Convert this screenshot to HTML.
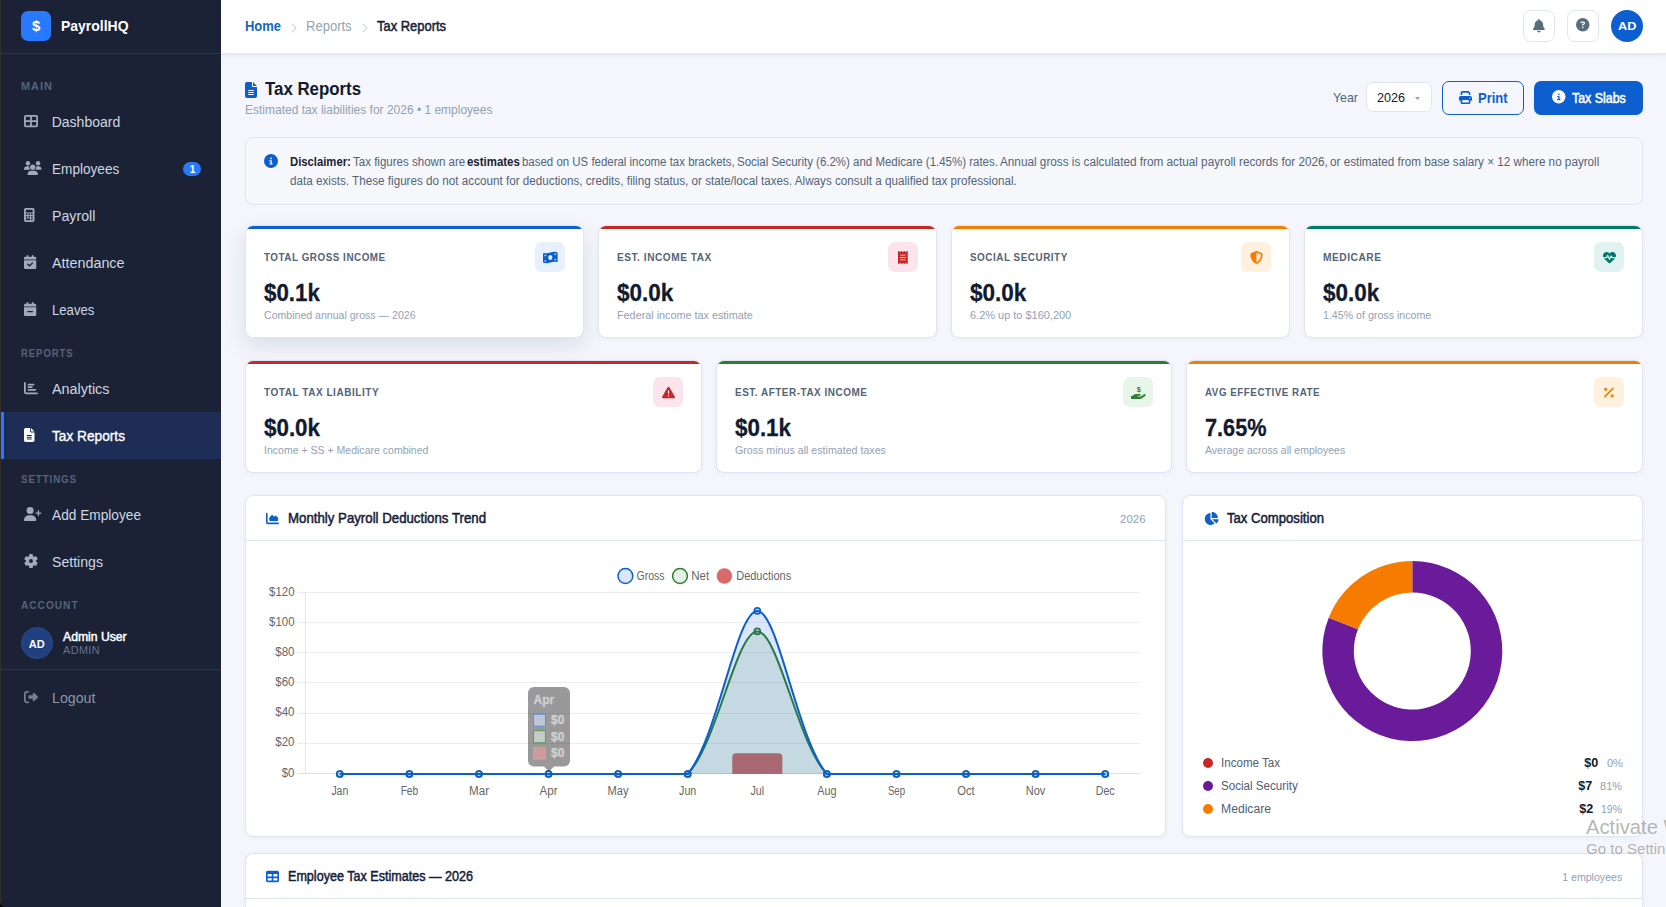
<!DOCTYPE html>
<html lang="en">
<head>
<meta charset="utf-8">
<title>Tax Reports - PayrollHQ</title>
<style>
*{box-sizing:border-box;margin:0;padding:0}
html,body{width:1666px;height:907px;overflow:hidden}
body{position:relative;background:#f4f6fb;font-family:"Liberation Sans",sans-serif;color:#1a2236;font-size:14px}
.a{position:absolute;white-space:nowrap;line-height:1}
.t{position:absolute;white-space:nowrap;line-height:20px;height:20px;margin-top:-10px;margin-left:-.3px;transform-origin:0 50%}
.r{transform-origin:100% 50%}
.b{font-weight:700}
svg{position:absolute;display:block;overflow:visible}
/* sidebar */
#sb{left:0;top:0;width:221px;height:907px;background:#1b2236;border-left:1px solid #32302d;border-bottom-left-radius:5px}
#logo{left:21px;top:11px;width:30px;height:30px;border-radius:7px;background:#2979ff}
.sbl{font-size:10.5px;font-weight:700;letter-spacing:1px;color:#56637d}
.nv{font-size:14px;color:#cdd6e2;left:52px}
.ni{fill:#a0aaba}
#act{left:1px;top:412px;width:220px;height:47px;background:#1d2d55;border-left:3px solid #2979ff}
/* topbar */
#tb{left:221px;top:0;width:1445px;height:54px;background:#fff;border-bottom:1px solid #e4e9f3;box-shadow:0 1px 4px rgba(30,50,100,.10)}
.ib{width:32px;height:32px;top:10px;border:1px solid #e0e6f1;border-radius:8px;background:#fff}
/* cards */
.card{background:#fff;border:1px solid #e0e4f0;border-radius:8px;box-shadow:0 1px 4px rgba(30,50,100,.05)}
.sc{height:113px;overflow:hidden}
.sc i{position:absolute;left:0;top:0;width:100%;height:3px}
.sl{font-size:10.5px;font-weight:700;letter-spacing:.55px;color:#546478}
.sv{font-size:24px;font-weight:700;color:#111a2e;line-height:30px;height:30px;margin-top:-14.400px;-webkit-text-stroke:.3px #111a2e}
.ss{font-size:11px;color:#93a1b3}
.ic{width:30px;height:30px;border-radius:7px}
.ch{font-size:14px;color:#16203a;-webkit-text-stroke:.5px #16203a}
.ax{font-size:12px;color:#666}
.lg{font-size:12px;color:#4f6072}
.lv{font-size:12px;font-weight:700;color:#111a2e}
.lp{font-size:11px;color:#93a1b3}
/*FIT*/
#t_brand{transform:scaleX(0.9970)}
#t_main{transform:scaleX(1.0375)}
#t_dash{transform:scaleX(1.0000)}
#t_emp{transform:scaleX(0.9716)}
#t_pay{transform:scaleX(1.0141)}
#t_att{transform:scaleX(1.0234)}
#t_leav{transform:scaleX(0.9390)}
#t_reports{transform:scaleX(0.9106)}
#t_ana{transform:scaleX(1.0262)}
#t_taxr{transform:scaleX(0.9772)}
#t_settingsl{transform:scaleX(0.9254)}
#t_addemp{transform:scaleX(0.9774)}
#t_set{transform:scaleX(1.0080)}
#t_account{transform:scaleX(0.9681)}
#t_admin{transform:scaleX(0.9378)}
#t_adminr{transform:scaleX(1.0323)}
#t_logout{transform:scaleX(1.0134)}
#t_home{transform:scaleX(0.9253)}
#t_reps{transform:scaleX(0.9300)}
#t_taxr2{transform:scaleX(0.9237)}
#t_ad2{transform:scaleX(1.1516)}
#t_title{transform:scaleX(0.9347)}
#t_sub{transform:scaleX(0.9989)}
#t_year{transform:scaleX(0.9512)}
#t_2026{transform:scaleX(0.9681)}
#t_print{transform:scaleX(0.9282)}
#t_slabs{transform:scaleX(0.8863)}
#t_disc2{transform:scaleX(0.9731)}
#s0l{transform:scaleX(0.9398)}
#s0v{transform:scaleX(0.9290)}
#s0s{transform:scaleX(0.9603)}
#s1l{transform:scaleX(0.9626)}
#s1v{transform:scaleX(0.9374)}
#s1s{transform:scaleX(0.9828)}
#s2l{transform:scaleX(0.9428)}
#s2v{transform:scaleX(0.9374)}
#s2s{transform:scaleX(0.9967)}
#s3l{transform:scaleX(0.9684)}
#s3v{transform:scaleX(0.9374)}
#s3s{transform:scaleX(0.9670)}
#s4l{transform:scaleX(0.9552)}
#s4v{transform:scaleX(0.9324)}
#s4s{transform:scaleX(0.9569)}
#s5l{transform:scaleX(0.9465)}
#s5v{transform:scaleX(0.9324)}
#s5s{transform:scaleX(0.9680)}
#s6l{transform:scaleX(0.9336)}
#s6v{transform:scaleX(0.9036)}
#s6s{transform:scaleX(0.9567)}
#c_title{transform:scaleX(0.9459)}
#c_year{transform:scaleX(0.9963)}
#p_title{transform:scaleX(0.9372)}
#p0l{transform:scaleX(0.9647)}
#p0v{transform:scaleX(1.0480)}
#p0p{transform:scaleX(1.0059)}
#p1l{transform:scaleX(0.9676)}
#p1v{transform:scaleX(1.0480)}
#p1p{transform:scaleX(0.9986)}
#p2l{transform:scaleX(1.0130)}
#p2v{transform:scaleX(1.0480)}
#p2p{transform:scaleX(0.9532)}
#e_title{transform:scaleX(0.8983)}
#e_cnt{transform:scaleX(0.9200)}
#w1{transform:scaleX(1.0118)}
#w2{transform:scaleX(1.0751)}
#d1a{transform:scaleX(0.9397)}
#d1b{transform:scaleX(0.9612)}
#d1c{transform:scaleX(0.9535)}
#d1d{transform:scaleX(0.9542)}
#d1e{transform:scaleX(0.9564)}
#d1f{transform:scaleX(0.9790)}
#d1g{transform:scaleX(0.9741)}
/*ENDFIT*/
</style>
</head>
<body>
<!-- SIDEBAR -->
<div class="a" style="left:0;top:899px;width:8px;height:8px;background:#000"></div>
<div id="sb" class="a"></div>
<div id="logo" class="a"></div>
<div class="t b" id="t_dollar" style="left:32.3px;top:26px;font-size:15px;color:#fff">$</div>
<div class="t b" id="t_brand" style="left:61px;top:26px;font-size:14px;color:#fff">PayrollHQ</div>
<div class="a" style="left:1px;top:53px;width:220px;height:1px;background:#2b344b"></div>
<div class="t sbl" id="t_main" style="left:21px;top:86.300px">MAIN</div>
<div class="t nv" id="t_dash" style="top:122px">Dashboard</div>
<div class="t nv" id="t_emp" style="top:169px">Employees</div>
<div class="a" style="left:183px;top:162px;width:18px;height:14px;border-radius:7px;background:#2979ff"></div>
<div class="t b" id="t_badge" style="left:190px;top:170.200px;font-size:10px;color:#fff">1</div>
<div class="t nv" id="t_pay" style="top:216px">Payroll</div>
<div class="t nv" id="t_att" style="top:263px">Attendance</div>
<div class="t nv" id="t_leav" style="top:310px">Leaves</div>
<div class="t sbl" id="t_reports" style="left:21px;top:353.300px">REPORTS</div>
<div class="t nv" id="t_ana" style="top:389px">Analytics</div>
<div id="act" class="a"></div>
<div class="t nv" id="t_taxr" style="top:436px;color:#fff;-webkit-text-stroke:.35px #fff">Tax Reports</div>
<div class="t sbl" id="t_settingsl" style="left:21px;top:479.300px">SETTINGS</div>
<div class="t nv" id="t_addemp" style="top:515px">Add Employee</div>
<div class="t nv" id="t_set" style="top:562px">Settings</div>
<div class="t sbl" id="t_account" style="left:21px;top:605.300px">ACCOUNT</div>
<div class="a" style="left:21px;top:627px;width:32px;height:32px;border-radius:16px;background:#20407f;border:1px solid #2c4a8a"></div>
<div class="t b" id="t_ad1" style="left:29px;top:644px;font-size:11px;color:#fff">AD</div>
<div class="t" id="t_admin" style="left:63px;top:637px;font-size:13px;color:#fff;-webkit-text-stroke:.5px #fff">Admin User</div>
<div class="t" id="t_adminr" style="left:63px;top:650.200px;font-size:10.5px;letter-spacing:.4px;color:#65748e">ADMIN</div>
<div class="a" style="left:1px;top:669px;width:220px;height:1px;background:#2b344b"></div>
<div class="t nv" id="t_logout" style="top:698px;color:#8a96aa">Logout</div>
<!-- SIDEBAR ICONS -->
<svg class="ni" style="left:24px;top:114px" width="14.00" height="14" viewBox="0 0 512 512"><path fill-rule="evenodd" d="M64 32h384a64 64 0 0 1 64 64v320a64 64 0 0 1-64 64H64a64 64 0 0 1-64-64V96a64 64 0 0 1 64-64zM64 96v128h160V96zM288 96v128h160V96zM64 288v128h160V288zM288 288v128h160V288z"/></svg>
<svg class="ni" style="left:24px;top:161px" width="17.50" height="14" viewBox="0 0 640 512"><circle cx="144" cy="80" r="80"/><circle cx="512" cy="80" r="80"/><circle cx="320" cy="224" r="96"/><path d="M0 298.7C0 239.8 47.8 192 106.7 192h42.700c15.900 0 31 3.500 44.600 9.700-1.300 7.200-1.900 14.700-1.900 22.300 0 38.200 16.800 72.500 43.300 96H21.300C9.600 320 0 310.400 0 298.700zM640 298.700C640 239.800 592.200 192 533.300 192h-42.700c-15.900 0-31 3.500-44.600 9.700 1.300 7.200 1.900 14.700 1.900 22.300 0 38.200-16.800 72.500-43.300 96h214.100c11.700 0 21.300-9.600 21.300-21.300zM128 485.300C128 411.700 187.700 352 261.300 352h117.400C452.300 352 512 411.700 512 485.300c0 14.700-11.900 26.700-26.700 26.700H154.700c-14.700 0-26.700-11.900-26.700-26.700z"/></svg>
<svg class="ni" style="left:24px;top:208px" width="10.50" height="14" viewBox="0 0 384 512"><path fill-rule="evenodd" d="M64 0h256a64 64 0 0 1 64 64v384a64 64 0 0 1-64 64H64a64 64 0 0 1-64-64V64A64 64 0 0 1 64 0zM96 64a32 32 0 0 0-32 32v32a32 32 0 0 0 32 32h192a32 32 0 0 0 32-32V96a32 32 0 0 0-32-32zM96 192a32 32 0 1 0 0 64 32 32 0 1 0 0-64zM192 192a32 32 0 1 0 0 64 32 32 0 1 0 0-64zM288 192a32 32 0 1 0 0 64 32 32 0 1 0 0-64zM96 288a32 32 0 1 0 0 64 32 32 0 1 0 0-64zM192 288a32 32 0 1 0 0 64 32 32 0 1 0 0-64zM288 288a32 32 0 1 0 0 64 32 32 0 1 0 0-64zM288 384a32 32 0 1 0 0 64 32 32 0 1 0 0-64zM96 384a32 32 0 1 0 0 64h96a32 32 0 1 0 0-64z"/></svg>
<svg class="ni" style="left:24px;top:255px" width="12.25" height="14" viewBox="0 0 448 512"><path fill-rule="evenodd" d="M128 0c17.700 0 32 14.300 32 32V64H288V32c0-17.700 14.300-32 32-32s32 14.300 32 32V64h48c26.500 0 48 21.500 48 48v48H0V112C0 85.500 21.500 64 48 64H96V32c0-17.700 14.300-32 32-32zM0 192H448V464c0 26.500-21.500 48-48 48H48c-26.500 0-48-21.500-48-48V192zM329 305c9.400-9.400 9.400-24.600 0-33.900s-24.600-9.400-33.900 0l-95 95-47-47c-9.400-9.400-24.600-9.400-33.900 0s-9.400 24.600 0 33.900l64 64c9.400 9.400 24.600 9.400 33.900 0L329 305z"/></svg>
<svg class="ni" style="left:24px;top:302px" width="12.25" height="14" viewBox="0 0 448 512"><path fill-rule="evenodd" d="M128 0c17.700 0 32 14.300 32 32V64H288V32c0-17.700 14.300-32 32-32s32 14.300 32 32V64h48c26.500 0 48 21.500 48 48v48H0V112C0 85.500 21.500 64 48 64H96V32c0-17.700 14.300-32 32-32zM0 192H448V464c0 26.500-21.500 48-48 48H48c-26.500 0-48-21.500-48-48V192zM312 376c13.300 0 24-10.700 24-24s-10.700-24-24-24H136c-13.300 0-24 10.700-24 24s10.700 24 24 24H312z"/></svg>
<svg class="ni" style="left:24px;top:381px" width="14.00" height="14" viewBox="0 0 512 512"><path d="M32 32c17.700 0 32 14.300 32 32V400c0 8.800 7.200 16 16 16H480c17.700 0 32 14.300 32 32s-14.300 32-32 32H80c-44.200 0-80-35.800-80-80V64C0 46.300 14.300 32 32 32zm96 96c0-17.700 14.300-32 32-32h192c17.700 0 32 14.300 32 32s-14.300 32-32 32H160c-17.700 0-32-14.300-32-32zm32 64H288c17.700 0 32 14.300 32 32s-14.300 32-32 32H160c-17.700 0-32-14.300-32-32s14.300-32 32-32zm0 96H416c17.700 0 32 14.300 32 32s-14.300 32-32 32H160c-17.700 0-32-14.300-32-32s14.300-32 32-32z"/></svg>
<svg class="" style="left:24px;top:428px" width="10.50" height="14" viewBox="0 0 384 512" fill="#fff"><path fill-rule="evenodd" d="M64 0C28.700 0 0 28.700 0 64V448c0 35.300 28.700 64 64 64H320c35.300 0 64-28.700 64-64V160H256c-17.700 0-32-14.300-32-32V0H64zM256 0V128H384L256 0zM112 256H272c8.800 0 16 7.200 16 16s-7.200 16-16 16H112c-8.800 0-16-7.200-16-16s7.200-16 16-16zm0 64H272c8.800 0 16 7.200 16 16s-7.200 16-16 16H112c-8.800 0-16-7.200-16-16s7.200-16 16-16zm0 64H272c8.800 0 16 7.200 16 16s-7.200 16-16 16H112c-8.800 0-16-7.200-16-16s7.200-16 16-16z"/></svg>
<svg class="ni" style="left:24px;top:507px" width="17.50" height="14" viewBox="0 0 640 512"><path d="M96 128a128 128 0 1 1 256 0A128 128 0 1 1 96 128zM0 482.300C0 383.800 79.800 304 178.300 304h91.400C368.200 304 448 383.800 448 482.300c0 16.400-13.300 29.700-29.700 29.700H29.700C13.300 512 0 498.700 0 482.300zM504 312V248H440c-13.300 0-24-10.700-24-24s10.700-24 24-24h64V136c0-13.300 10.700-24 24-24s24 10.700 24 24v64h64c13.300 0 24 10.700 24 24s-10.700 24-24 24H552v64c0 13.300-10.700 24-24 24s-24-10.700-24-24z"/></svg>
<svg class="ni" style="left:24px;top:554px" width="14.00" height="14" viewBox="0 0 512 512"><path fill-rule="evenodd" d="M256 66a190 190 0 1 0 0 380 190 190 0 1 0 0-380zM256 186a70 70 0 1 1 0 140 70 70 0 1 1 0-140z"/><rect x="186" y="4" width="140" height="150" rx="34" transform="rotate(0 256 256)"/><rect x="186" y="4" width="140" height="150" rx="34" transform="rotate(60 256 256)"/><rect x="186" y="4" width="140" height="150" rx="34" transform="rotate(120 256 256)"/><rect x="186" y="4" width="140" height="150" rx="34" transform="rotate(180 256 256)"/><rect x="186" y="4" width="140" height="150" rx="34" transform="rotate(240 256 256)"/><rect x="186" y="4" width="140" height="150" rx="34" transform="rotate(300 256 256)"/></svg>
<svg class="" style="left:24px;top:690px" width="14.00" height="14" viewBox="0 0 512 512" fill="#727e94"><path d="M377.900 105.900L500.700 228.700c7.200 7.200 11.300 17.100 11.300 27.300s-4.100 20.100-11.300 27.300L377.900 406.100c-6.400 6.400-15 9.900-24 9.900-18.700 0-33.900-15.200-33.900-33.900V320H192c-17.700 0-32-14.300-32-32V224c0-17.700 14.300-32 32-32H320V129.900c0-18.700 15.200-33.900 33.900-33.900 9 0 17.600 3.600 24 9.900zM160 96H96c-17.700 0-32 14.300-32 32V384c0 17.700 14.300 32 32 32h64c17.700 0 32 14.300 32 32s-14.300 32-32 32H96c-53 0-96-43-96-96V128C0 75 43 32 96 32h64c17.700 0 32 14.300 32 32s-14.300 32-32 32z"/></svg>

<!-- TOPBAR -->
<div id="tb" class="a"></div>
<div class="t b" id="t_home" style="left:245px;top:26px;font-size:14px;color:#1565c0">Home</div>
<div class="t" id="t_reps" style="left:306px;top:26px;font-size:14px;color:#93a4b3">Reports</div>
<div class="t" id="t_taxr2" style="left:377px;top:26px;font-size:14px;color:#1a2236;-webkit-text-stroke:.5px #1a2236">Tax Reports</div>
<div class="a ib" style="left:1523px"></div>
<div class="a ib" style="left:1567px"></div>
<div class="a" style="left:1611px;top:10px;width:32px;height:32px;border-radius:16px;background:#0d5fd0"></div>
<div class="t b" id="t_ad2" style="left:1618px;top:25.700px;font-size:11px;color:#fff">AD</div>
<svg style="left:1533px;top:18.5px" width="11.81" height="13.5" viewBox="0 0 448 512" fill="#546e7a"><path d="M224 0c-17.700 0-32 14.300-32 32V51.200C119 66 64 130.600 64 208v18.800c0 47-17.300 92.400-48.500 127.600l-7.400 8.300c-8.400 9.400-10.400 22.900-5.300 34.400S19.400 416 32 416H416c12.600 0 24-7.400 29.200-18.900s3.100-25-5.300-34.400l-7.400-8.300C401.300 319.200 384 273.900 384 226.800V208c0-77.400-55-142-128-156.800V32c0-17.700-14.300-32-32-32zm45.300 493.300c12-12 18.700-28.300 18.700-45.300H160c0 17 6.700 33.300 18.700 45.300s28.300 18.700 45.300 18.700 33.300-6.700 45.300-18.700z"/></svg>
<svg style="left:1576.2px;top:18.3px" width="13.50" height="13.5" viewBox="0 0 512 512" fill="#546e7a"><path fill-rule="evenodd" d="M256 512A256 256 0 1 0 256 0a256 256 0 1 0 0 512zM169.800 165.300c7.900-22.300 29.100-37.300 52.800-37.300h58.300c34.900 0 63.100 28.300 63.100 63.100 0 22.600-12.100 43.500-31.700 54.800L280 264.400c-.2 13-10.900 23.600-24 23.600-13.300 0-24-10.700-24-24V250.500c0-8.600 4.600-16.500 12.100-20.800l44.300-25.400c4.700-2.700 7.600-7.700 7.600-13.100 0-8.400-6.800-15.100-15.100-15.100H222.600c-3.400 0-6.400 2.100-7.500 5.300l-.4 1.200c-4.400 12.500-18.200 19-30.600 14.600s-19-18.200-14.600-30.600l.4-1.200zM224 352a32 32 0 1 1 64 0 32 32 0 1 1-64 0z"/></svg>
<svg style="left:288.500px;top:22.500px" width="10" height="10" viewBox="0 0 10 10"><path d="M3 1l4 4-4 4" fill="none" stroke="#d3dae2" stroke-width="1.1" stroke-linecap="round" stroke-linejoin="round"/></svg>
<svg style="left:359.500px;top:22.500px" width="10" height="10" viewBox="0 0 10 10"><path d="M3 1l4 4-4 4" fill="none" stroke="#d3dae2" stroke-width="1.1" stroke-linecap="round" stroke-linejoin="round"/></svg>

<!-- PAGE HEADER -->
<div class="t b" id="t_title" style="left:265px;top:89px;font-size:18px;color:#111a2e;line-height:24px;height:24px;margin-top:-12px">Tax Reports</div>
<div class="t" id="t_sub" style="left:245px;top:109.700px;font-size:12px;color:#93a1b3">Estimated tax liabilities for 2026 • 1 employees</div>
<div class="t" id="t_year" style="left:1333px;top:98px;font-size:13px;color:#546478">Year</div>
<div class="a" style="left:1366px;top:82px;width:66px;height:30px;border:1px solid #e0e6f1;border-radius:7px;background:#fff"></div>
<div class="t" id="t_2026" style="left:1377px;top:98px;font-size:13px;color:#111a2e">2026</div>
<div class="a" style="left:1442px;top:81px;width:82px;height:34px;border:1.5px solid #0d5fd0;border-radius:7px;background:#f4f6fb"></div>
<div class="t b" id="t_print" style="left:1478px;top:98px;font-size:14px;color:#0d5fd0">Print</div>
<div class="a" style="left:1534px;top:81px;width:109px;height:34px;border-radius:7px;background:#0d5fd0"></div>
<div class="t" id="t_slabs" style="left:1572px;top:98px;font-size:14px;color:#fff;-webkit-text-stroke:.5px #fff">Tax Slabs</div>
<svg style="left:245px;top:82px" width="12.00" height="16" viewBox="0 0 384 512" fill="#0d5fd0"><path fill-rule="evenodd" d="M64 0C28.700 0 0 28.700 0 64V448c0 35.300 28.700 64 64 64H320c35.300 0 64-28.700 64-64V160H256c-17.700 0-32-14.300-32-32V0H64zM256 0V128H384L256 0zM112 256H272c8.800 0 16 7.200 16 16s-7.200 16-16 16H112c-8.800 0-16-7.200-16-16s7.200-16 16-16zm0 64H272c8.800 0 16 7.200 16 16s-7.200 16-16 16H112c-8.800 0-16-7.200-16-16s7.200-16 16-16zm0 64H272c8.800 0 16 7.200 16 16s-7.200 16-16 16H112c-8.800 0-16-7.200-16-16s7.200-16 16-16z"/></svg>
<svg style="left:1459px;top:90.7px" width="13.00" height="13" viewBox="0 0 512 512" fill="#0d5fd0"><path fill-rule="evenodd" d="M128 0C92.700 0 64 28.700 64 64v96h64V64H354.700L384 93.300V160h64V93.300c0-17-6.700-33.300-18.700-45.300L400 18.700C388 6.700 371.700 0 354.700 0H128zM384 352v96H128V352H384zm64 32h32c17.700 0 32-14.300 32-32V256c0-35.300-28.700-64-64-64H64c-35.300 0-64 28.700-64 64v96c0 17.700 14.300 32 32 32H64v64c0 35.300 28.700 64 64 64H384c35.300 0 64-28.700 64-64V384zM432 248a24 24 0 1 1 0 48 24 24 0 1 1 0-48z"/></svg>
<svg style="left:1551.8px;top:89.800px" width="13.50" height="13.5" viewBox="0 0 512 512" fill="#fff"><path fill-rule="evenodd" d="M256 512A256 256 0 1 0 256 0a256 256 0 1 0 0 512zM216 336h24V272H216c-13.300 0-24-10.700-24-24s10.700-24 24-24h48c13.300 0 24 10.700 24 24v88h8c13.300 0 24 10.700 24 24s-10.700 24-24 24H216c-13.300 0-24-10.700-24-24s10.700-24 24-24zm40-208a32 32 0 1 1 0 64 32 32 0 1 1 0-64z"/></svg>
<svg style="left:1414.500px;top:96.500px" width="5" height="3" viewBox="0 0 5 3"><path d="M0 0h5L2.500 3z" fill="#97a3b0"/></svg>

<!-- DISCLAIMER -->
<div class="a" style="left:245px;top:137px;width:1398px;height:68px;border:1px solid #dfe4ef;border-radius:8px;background:#f5f7fb"></div>
<div class="t b" id="d1a" style="left:290.5px;top:162px;font-size:12px;color:#1a2236">Disclaimer:</div>
<div class="t" id="d1b" style="left:353.5px;top:162px;font-size:12px;color:#546478">Tax figures shown are</div>
<div class="t b" id="d1c" style="left:467.4px;top:162px;font-size:12px;color:#1a2236">estimates</div>
<div class="t" id="d1d" style="left:522.4px;top:162px;font-size:12px;color:#546478">based on US federal income tax brackets,</div>
<div class="t" id="d1e" style="left:737.1px;top:162px;font-size:12px;color:#546478">Social Security (6.2%) and Medicare (1.45%) rates.</div>
<div class="t" id="d1f" style="left:1000.2px;top:162px;font-size:12px;color:#546478">Annual gross is calculated from actual payroll records for 2026,</div>
<div class="t" id="d1g" style="left:1330.2px;top:162px;font-size:12px;color:#546478">or estimated from base salary × 12 where no payroll</div>
<div class="t" id="t_disc2" style="left:290px;top:181px;font-size:12px;color:#546478">data exists. These figures do not account for deductions, credits, filing status, or state/local taxes. Always consult a qualified tax professional.</div>
<svg style="left:264px;top:154px" width="14.00" height="14" viewBox="0 0 512 512" fill="#0d5fd0"><path fill-rule="evenodd" d="M256 512A256 256 0 1 0 256 0a256 256 0 1 0 0 512zM216 336h24V272H216c-13.300 0-24-10.700-24-24s10.700-24 24-24h48c13.300 0 24 10.700 24 24v88h8c13.300 0 24 10.700 24 24s-10.700 24-24 24H216c-13.300 0-24-10.700-24-24s10.700-24 24-24zm40-208a32 32 0 1 1 0 64 32 32 0 1 1 0-64z"/></svg>

<!--STATS-START-->
<div class="a card sc" style="left:245px;top:225px;width:339px;box-shadow:0 8px 22px rgba(30,50,100,.12)"><i style="background:#0d5fd0"></i></div>
<div class="t sl" id="s0l" style="left:264px;top:257px">TOTAL GROSS INCOME</div>
<div class="t sv" id="s0v" style="left:264px;top:292px">$0.1k</div>
<div class="t ss" id="s0s" style="left:264px;top:315px">Combined annual gross — 2026</div>
<div class="a ic" style="left:535px;top:242px;background:#e7f0fd"></div>
<svg style="left:542.69px;top:250.50px" width="14.62" height="13" viewBox="0 0 576 512" fill="#0d5fd0"><path fill-rule="evenodd" d="M0 112.500V422.300c0 18 10.100 35 27 41.300 87 32.500 174 10.300 261-11.900 79.800-20.300 159.600-40.700 239.300-18.900 23 6.300 48.700-9.500 48.700-33.400V89.700c0-18-10.100-35-27-41.300C462 15.900 375 38.100 288 60.300 208.200 80.600 128.400 100.900 48.700 79.100 25.600 72.800 0 88.600 0 112.500zM288 352c-44.200 0-80-43-80-96s35.800-96 80-96 80 43 80 96-35.800 96-80 96zM64 352c35.300 0 64 28.700 64 64H64V352zm64-208c0 35.300-28.700 64-64 64V144h64zM512 304v64H448c0-35.300 28.700-64 64-64zM448 96h64v64c-35.300 0-64-28.700-64-64z"/></svg>
<div class="a card sc" style="left:598px;top:225px;width:339px"><i style="background:#c62828"></i></div>
<div class="t sl" id="s1l" style="left:617px;top:257px">EST. INCOME TAX</div>
<div class="t sv" id="s1v" style="left:617px;top:292px">$0.0k</div>
<div class="t ss" id="s1s" style="left:617px;top:315px">Federal income tax estimate</div>
<div class="a ic" style="left:888px;top:242px;background:#fce4ec"></div>
<svg style="left:898.12px;top:250.50px" width="9.75" height="13" viewBox="0 0 384 512" fill="#c62828"><path fill-rule="evenodd" d="M14 2.200C22.500-1.700 32.500-.3 39.600 5.800L80 40.400 120.400 5.800c9-7.700 22.300-7.700 31.200 0L192 40.400 232.400 5.800c9-7.700 22.200-7.700 31.200 0L304 40.400 344.400 5.800c7.100-6.100 17.100-7.500 25.600-3.600s14 12.400 14 21.800V488c0 9.400-5.500 17.900-14 21.800s-18.500 2.500-25.600-3.600L304 471.600l-40.400 34.600c-9 7.700-22.200 7.700-31.200 0L192 471.600l-40.400 34.600c-9 7.700-22.300 7.700-31.200 0L80 471.600 39.600 506.200c-7.100 6.100-17.100 7.500-25.600 3.600S0 497.400 0 488V24C0 14.600 5.500 6.100 14 2.200zM96 144c-8.800 0-16 7.200-16 16s7.200 16 16 16H288c8.800 0 16-7.200 16-16s-7.200-16-16-16H96zM80 352c0 8.800 7.200 16 16 16H288c8.800 0 16-7.200 16-16s-7.200-16-16-16H96c-8.800 0-16 7.200-16 16zM96 240c-8.800 0-16 7.200-16 16s7.200 16 16 16H288c8.800 0 16-7.200 16-16s-7.200-16-16-16H96z"/></svg>
<div class="a card sc" style="left:951px;top:225px;width:339px"><i style="background:#f57c00"></i></div>
<div class="t sl" id="s2l" style="left:970px;top:257px">SOCIAL SECURITY</div>
<div class="t sv" id="s2v" style="left:970px;top:292px">$0.0k</div>
<div class="t ss" id="s2s" style="left:970px;top:315px">6.2% up to $160,200</div>
<div class="a ic" style="left:1241px;top:242px;background:#fff1de"></div>
<svg style="left:1249.50px;top:250.50px" width="13.00" height="13" viewBox="0 0 512 512" fill="#f57c00"><path fill-rule="evenodd" d="M256 0c4.600 0 9.200 1 13.400 2.900L457.700 82.800c22 9.300 38.400 31 38.300 57.200-.5 99.200-41.300 280.700-213.600 363.200-16.700 8-36.100 8-52.800 0C57.300 420.700 16.500 239.200 16 140c-.1-26.200 16.300-47.900 38.300-57.200L242.700 2.900C246.800 1 251.400 0 256 0zm0 66.800V444.800C394 378 431.100 230.100 432 141.400L256 66.800z"/></svg>
<div class="a card sc" style="left:1304px;top:225px;width:339px"><i style="background:#00796b"></i></div>
<div class="t sl" id="s3l" style="left:1323px;top:257px">MEDICARE</div>
<div class="t sv" id="s3v" style="left:1323px;top:292px">$0.0k</div>
<div class="t ss" id="s3s" style="left:1323px;top:315px">1.45% of gross income</div>
<div class="a ic" style="left:1594px;top:242px;background:#e0f2f1"></div>
<svg style="left:1602.50px;top:250.50px" width="13.00" height="13" viewBox="0 0 512 512" fill="#00796b"><path d="M228.300 469.100L47.600 300.400c-4.200-3.900-8.200-8.100-11.900-12.400h87c22.600 0 43-13.600 51.700-34.500l10.500-25.200 49.300 109.500c3.800 8.500 12.100 14 21.400 14.100s17.800-5 22-13.300L320 253.700l1.700 3.400c9.500 19 28.900 31 50.100 31H476.300c-3.700 4.300-7.700 8.500-11.900 12.400L283.700 469.100c-7.500 7-17.400 10.900-27.700 10.900s-20.200-3.900-27.700-10.900zM503.700 240h-132c-3 0-5.800-1.700-7.200-4.400l-23.200-46.300c-4.100-8.100-12.400-13.300-21.500-13.300s-17.400 5.100-21.500 13.300l-41.400 82.800L205.900 158.200c-3.900-8.700-12.700-14.300-22.200-14.100s-18.100 5.900-21.800 14.800l-31.800 76.300c-1.200 3-4.200 4.900-7.400 4.900H16c-2.600 0-5 .4-7.300 1.100C3 225.200 0 208.200 0 190.900v-5.800c0-69.900 50.500-129.500 119.400-141C165 36.500 211.400 51.400 244 84l12 12 12-12c32.600-32.600 79-47.500 124.600-39.900C461.500 55.600 512 115.200 512 185.100v5.800c0 16.900-2.800 33.500-8.300 49.100z"/></svg>
<div class="a card sc" style="left:245px;top:360px;width:457px"><i style="background:#c62828"></i></div>
<div class="t sl" id="s4l" style="left:264px;top:392px">TOTAL TAX LIABILITY</div>
<div class="t sv" id="s4v" style="left:264px;top:427px">$0.0k</div>
<div class="t ss" id="s4s" style="left:264px;top:450px">Income + SS + Medicare combined</div>
<div class="a ic" style="left:653px;top:377px;background:#fce4ec"></div>
<svg style="left:661.50px;top:385.50px" width="13.00" height="13" viewBox="0 0 512 512" fill="#c62828"><path fill-rule="evenodd" d="M256 32c14.200 0 27.300 7.500 34.500 19.800l216 368c7.300 12.400 7.300 27.700.2 40.100S486.300 480 472 480H40c-14.300 0-27.600-7.700-34.700-20.100s-7-27.800.2-40.100l216-368C228.700 39.500 241.800 32 256 32zm0 128c-13.300 0-24 10.700-24 24V296c0 13.300 10.700 24 24 24s24-10.700 24-24V184c0-13.300-10.700-24-24-24zm32 224a32 32 0 1 0-64 0 32 32 0 1 0 64 0z"/></svg>
<div class="a card sc" style="left:716px;top:360px;width:456px"><i style="background:#2e7d32"></i></div>
<div class="t sl" id="s5l" style="left:735px;top:392px">EST. AFTER-TAX INCOME</div>
<div class="t sv" id="s5v" style="left:735px;top:427px">$0.1k</div>
<div class="t ss" id="s5s" style="left:735px;top:450px">Gross minus all estimated taxes</div>
<div class="a ic" style="left:1123px;top:377px;background:#e8f5e9"></div>
<svg style="left:1130.69px;top:385.50px" width="14.62" height="13" viewBox="0 0 576 512" fill="#2e7d32"><path d="M559.700 392.200c17.800-13.100 21.600-38.100 8.500-55.900s-38.100-21.600-55.900-8.500L392.600 416H272c-8.800 0-16-7.200-16-16s7.200-16 16-16h80c17.700 0 32-14.300 32-32s-14.300-32-32-32H193.700c-29.100 0-57.300 9.900-80 28L68.800 384H32c-17.700 0-32 14.300-32 32v64c0 17.700 14.300 32 32 32H352.500c29 0 57.300-9.300 80.700-26.500l126.600-93.300z"/><text x="306" y="240" font-family="Liberation Sans,sans-serif" font-weight="700" font-size="290" text-anchor="middle">$</text></svg>
<div class="a card sc" style="left:1186px;top:360px;width:457px"><i style="background:#f57c00"></i></div>
<div class="t sl" id="s6l" style="left:1205px;top:392px">AVG EFFECTIVE RATE</div>
<div class="t sv" id="s6v" style="left:1205px;top:427px">7.65%</div>
<div class="t ss" id="s6s" style="left:1205px;top:450px">Average across all employees</div>
<div class="a ic" style="left:1594px;top:377px;background:#fff1de"></div>
<svg style="left:1604.12px;top:385.50px" width="9.75" height="13" viewBox="0 0 384 512" fill="#f57c00"><path d="M374.600 118.600c12.500-12.500 12.500-32.800 0-45.300s-32.800-12.500-45.300 0l-320 320c-12.500 12.500-12.500 32.800 0 45.300s32.800 12.500 45.300 0l320-320zM128 128A64 64 0 1 0 0 128a64 64 0 1 0 128 0zM384 384a64 64 0 1 0-128 0 64 64 0 1 0 128 0z"/></svg>
<!--STATS-END-->

<!--CHART-START-->
<div class="a card" style="left:245px;top:495px;width:921px;height:342px"></div>
<div class="a" style="left:246px;top:540px;width:919px;height:1px;background:#e0e4f0"></div>
<svg style="left:266px;top:511.5px" width="13" height="13" viewBox="0 0 512 512" fill="#0d5fd0"><path d="M64 64c0-17.700-14.300-32-32-32S0 46.300 0 64V400c0 44.200 35.800 80 80 80H480c17.700 0 32-14.300 32-32s-14.300-32-32-32H80c-8.800 0-16-7.200-16-16V64zm96 288H448c17.700 0 32-14.300 32-32V251.800c0-7.600-2.700-15-7.700-20.800l-65.800-76.800c-12.100-14.200-33.700-15-46.900-1.800l-21 21c-10 10-26.400 9.200-35.400-1.600l-39.200-47c-12.600-15.100-35.700-15.400-48.700-.6L135.900 215c-5.100 5.800-7.900 13.300-7.900 21.100v84c0 17.700 14.300 32 32 32z"/></svg>
<div class="t ch" id="c_title" style="left:288px;top:518px">Monthly Payroll Deductions Trend</div>
<div class="t ss r" id="c_year" style="right:520.5px;top:518.500px;font-size:11.5px">2026</div>
<svg style="left:246px;top:541px" width="919" height="295" viewBox="246 541 919 295" font-family="Liberation Sans,sans-serif">
<path d="M297.5 773.5H1139.5M297.5 743.5H1139.5M297.5 713.5H1139.5M297.5 682.5H1139.5M297.5 652.5H1139.5M297.5 622.5H1139.5M297.5 592.5H1139.5" stroke="#ebedf3" stroke-width="1" fill="none"/>
<path d="M305.5 592.5V773.5" stroke="#e3e5ea" stroke-width="1" fill="none"/>
<path d="M297.5 773.5H1139.5" stroke="#dcdfe6" stroke-width="1" fill="none"/>
<path d="M732.24 774.00V757.22a4 4 0 0 1 4-4h42.10a4 4 0 0 1 4 4V774.00z" fill="#d96a6a"/>
<path d="M339.79 774.00C360.67 774.00 388.50 774.00 409.38 774.00C430.25 774.00 458.08 774.00 478.96 774.00C499.83 774.00 527.67 774.00 548.54 774.00C569.42 774.00 597.25 774.00 618.12 774.00C639.00 774.00 674.98 774.00 687.71 774.00C716.73 744.27 736.42 631.43 757.29 631.43C778.17 631.43 797.85 744.27 826.88 774.00C839.60 774.00 875.58 774.00 896.46 774.00C917.33 774.00 945.17 774.00 966.04 774.00C986.92 774.00 1014.75 774.00 1035.62 774.00C1056.50 774.00 1084.33 774.00 1105.21 774.00V774.00H339.79z" fill="rgba(46,125,50,.12)"/>
<path d="M339.79 774.00C360.67 774.00 388.50 774.00 409.38 774.00C430.25 774.00 458.08 774.00 478.96 774.00C499.83 774.00 527.67 774.00 548.54 774.00C569.42 774.00 597.25 774.00 618.12 774.00C639.00 774.00 674.98 774.00 687.71 774.00C716.73 744.27 736.42 631.43 757.29 631.43C778.17 631.43 797.85 744.27 826.88 774.00C839.60 774.00 875.58 774.00 896.46 774.00C917.33 774.00 945.17 774.00 966.04 774.00C986.92 774.00 1014.75 774.00 1035.62 774.00C1056.50 774.00 1084.33 774.00 1105.21 774.00" fill="none" stroke="#2e7d32" stroke-width="2"/>
<circle cx="339.79" cy="774.00" r="3" fill="rgba(46,125,50,.12)" stroke="#2e7d32" stroke-width="1.7"/>
<circle cx="409.38" cy="774.00" r="3" fill="rgba(46,125,50,.12)" stroke="#2e7d32" stroke-width="1.7"/>
<circle cx="478.96" cy="774.00" r="3" fill="rgba(46,125,50,.12)" stroke="#2e7d32" stroke-width="1.7"/>
<circle cx="548.54" cy="774.00" r="3" fill="rgba(46,125,50,.12)" stroke="#2e7d32" stroke-width="1.7"/>
<circle cx="618.12" cy="774.00" r="3" fill="rgba(46,125,50,.12)" stroke="#2e7d32" stroke-width="1.7"/>
<circle cx="687.71" cy="774.00" r="3" fill="rgba(46,125,50,.12)" stroke="#2e7d32" stroke-width="1.7"/>
<circle cx="757.29" cy="631.43" r="3" fill="rgba(46,125,50,.12)" stroke="#2e7d32" stroke-width="1.7"/>
<circle cx="826.88" cy="774.00" r="3" fill="rgba(46,125,50,.12)" stroke="#2e7d32" stroke-width="1.7"/>
<circle cx="896.46" cy="774.00" r="3" fill="rgba(46,125,50,.12)" stroke="#2e7d32" stroke-width="1.7"/>
<circle cx="966.04" cy="774.00" r="3" fill="rgba(46,125,50,.12)" stroke="#2e7d32" stroke-width="1.7"/>
<circle cx="1035.62" cy="774.00" r="3" fill="rgba(46,125,50,.12)" stroke="#2e7d32" stroke-width="1.7"/>
<circle cx="1105.21" cy="774.00" r="3" fill="rgba(46,125,50,.12)" stroke="#2e7d32" stroke-width="1.7"/>
<path d="M339.79 774.00C360.67 774.00 388.50 774.00 409.38 774.00C430.25 774.00 458.08 774.00 478.96 774.00C499.83 774.00 527.67 774.00 548.54 774.00C569.42 774.00 597.25 774.00 618.12 774.00C639.00 774.00 675.94 774.00 687.71 774.00C717.69 738.88 736.42 610.96 757.29 610.96C778.17 610.96 796.89 738.88 826.88 774.00C838.64 774.00 875.58 774.00 896.46 774.00C917.33 774.00 945.17 774.00 966.04 774.00C986.92 774.00 1014.75 774.00 1035.62 774.00C1056.50 774.00 1084.33 774.00 1105.21 774.00V774.00H339.79z" fill="rgba(13,95,208,.15)"/>
<path d="M339.79 774.00C360.67 774.00 388.50 774.00 409.38 774.00C430.25 774.00 458.08 774.00 478.96 774.00C499.83 774.00 527.67 774.00 548.54 774.00C569.42 774.00 597.25 774.00 618.12 774.00C639.00 774.00 675.94 774.00 687.71 774.00C717.69 738.88 736.42 610.96 757.29 610.96C778.17 610.96 796.89 738.88 826.88 774.00C838.64 774.00 875.58 774.00 896.46 774.00C917.33 774.00 945.17 774.00 966.04 774.00C986.92 774.00 1014.75 774.00 1035.62 774.00C1056.50 774.00 1084.33 774.00 1105.21 774.00" fill="none" stroke="#0d5fd0" stroke-width="2"/>
<circle cx="339.79" cy="774.00" r="3" fill="rgba(13,95,208,.15)" stroke="#0d5fd0" stroke-width="1.7"/>
<circle cx="409.38" cy="774.00" r="3" fill="rgba(13,95,208,.15)" stroke="#0d5fd0" stroke-width="1.7"/>
<circle cx="478.96" cy="774.00" r="3" fill="rgba(13,95,208,.15)" stroke="#0d5fd0" stroke-width="1.7"/>
<circle cx="548.54" cy="774.00" r="3" fill="rgba(13,95,208,.15)" stroke="#0d5fd0" stroke-width="1.7"/>
<circle cx="618.12" cy="774.00" r="3" fill="rgba(13,95,208,.15)" stroke="#0d5fd0" stroke-width="1.7"/>
<circle cx="687.71" cy="774.00" r="3" fill="rgba(13,95,208,.15)" stroke="#0d5fd0" stroke-width="1.7"/>
<circle cx="757.29" cy="610.96" r="3" fill="rgba(13,95,208,.15)" stroke="#0d5fd0" stroke-width="1.7"/>
<circle cx="826.88" cy="774.00" r="3" fill="rgba(13,95,208,.15)" stroke="#0d5fd0" stroke-width="1.7"/>
<circle cx="896.46" cy="774.00" r="3" fill="rgba(13,95,208,.15)" stroke="#0d5fd0" stroke-width="1.7"/>
<circle cx="966.04" cy="774.00" r="3" fill="rgba(13,95,208,.15)" stroke="#0d5fd0" stroke-width="1.7"/>
<circle cx="1035.62" cy="774.00" r="3" fill="rgba(13,95,208,.15)" stroke="#0d5fd0" stroke-width="1.7"/>
<circle cx="1105.21" cy="774.00" r="3" fill="rgba(13,95,208,.15)" stroke="#0d5fd0" stroke-width="1.7"/>
<text x="294.5" y="776.6" text-anchor="end" font-size="12" fill="#666" textLength="12.8" lengthAdjust="spacingAndGlyphs">$0</text>
<text x="294.5" y="746.4" text-anchor="end" font-size="12" fill="#666" textLength="19.2" lengthAdjust="spacingAndGlyphs">$20</text>
<text x="294.5" y="716.3" text-anchor="end" font-size="12" fill="#666" textLength="19.2" lengthAdjust="spacingAndGlyphs">$40</text>
<text x="294.5" y="686.1" text-anchor="end" font-size="12" fill="#666" textLength="19.2" lengthAdjust="spacingAndGlyphs">$60</text>
<text x="294.5" y="655.9" text-anchor="end" font-size="12" fill="#666" textLength="19.2" lengthAdjust="spacingAndGlyphs">$80</text>
<text x="294.5" y="625.8" text-anchor="end" font-size="12" fill="#666" textLength="25.4" lengthAdjust="spacingAndGlyphs">$100</text>
<text x="294.5" y="595.6" text-anchor="end" font-size="12" fill="#666" textLength="25.4" lengthAdjust="spacingAndGlyphs">$120</text>
<text x="339.8" y="795.3" text-anchor="middle" font-size="12" fill="#666" textLength="16.8" lengthAdjust="spacingAndGlyphs">Jan</text>
<text x="409.4" y="795.3" text-anchor="middle" font-size="12" fill="#666" textLength="17.5" lengthAdjust="spacingAndGlyphs">Feb</text>
<text x="479.0" y="795.3" text-anchor="middle" font-size="12" fill="#666" textLength="20" lengthAdjust="spacingAndGlyphs">Mar</text>
<text x="548.5" y="795.3" text-anchor="middle" font-size="12" fill="#666" textLength="18" lengthAdjust="spacingAndGlyphs">Apr</text>
<text x="618.1" y="795.3" text-anchor="middle" font-size="12" fill="#666" textLength="21" lengthAdjust="spacingAndGlyphs">May</text>
<text x="687.7" y="795.3" text-anchor="middle" font-size="12" fill="#666" textLength="17.2" lengthAdjust="spacingAndGlyphs">Jun</text>
<text x="757.3" y="795.3" text-anchor="middle" font-size="12" fill="#666" textLength="13.6" lengthAdjust="spacingAndGlyphs">Jul</text>
<text x="826.9" y="795.3" text-anchor="middle" font-size="12" fill="#666" textLength="19.2" lengthAdjust="spacingAndGlyphs">Aug</text>
<text x="896.5" y="795.3" text-anchor="middle" font-size="12" fill="#666" textLength="17.2" lengthAdjust="spacingAndGlyphs">Sep</text>
<text x="966.0" y="795.3" text-anchor="middle" font-size="12" fill="#666" textLength="17.5" lengthAdjust="spacingAndGlyphs">Oct</text>
<text x="1035.6" y="795.3" text-anchor="middle" font-size="12" fill="#666" textLength="19.5" lengthAdjust="spacingAndGlyphs">Nov</text>
<text x="1105.2" y="795.3" text-anchor="middle" font-size="12" fill="#666" textLength="18.8" lengthAdjust="spacingAndGlyphs">Dec</text>
<circle cx="625.4" cy="576" r="7.4" fill="rgba(13,95,208,.15)" stroke="#0d5fd0" stroke-width="1.5"/>
<circle cx="680" cy="576" r="7.4" fill="rgba(46,125,50,.12)" stroke="#2e7d32" stroke-width="1.5"/>
<circle cx="724.4" cy="576" r="7.7" fill="#d96a6a"/>
<text x="636.5" y="580.2" font-size="12" fill="#666" textLength="28" lengthAdjust="spacingAndGlyphs">Gross</text>
<text x="691.2" y="580.2" font-size="12" fill="#666" textLength="18" lengthAdjust="spacingAndGlyphs">Net</text>
<text x="736.2" y="580.2" font-size="12" fill="#666" textLength="55" lengthAdjust="spacingAndGlyphs">Deductions</text>
<g opacity="1"><path d="M534 687h30a6 6 0 0 1 6 6v67.500a6 6 0 0 1-6 6h-10l-5 5-5-5h-10a6 6 0 0 1-6-6V693a6 6 0 0 1 6-6z" fill="rgba(0,0,0,.4)"/>
<text x="533.5" y="704" font-size="12" font-weight="700" fill="#d0d0d0" stroke="#d0d0d0" stroke-width=".35">Apr</text>
<rect x="533.500" y="714.2" width="12" height="12" fill="#bcc6d6" stroke="#5b8fd8" stroke-width="1"/>
<text x="551" y="724.1" font-size="12" font-weight="700" fill="#d0d0d0" stroke="#d0d0d0" stroke-width=".35">$0</text>
<rect x="533.500" y="730.7" width="12" height="12" fill="#c4cbc5" stroke="#5f9a63" stroke-width="1"/>
<text x="551" y="740.6" font-size="12" font-weight="700" fill="#d0d0d0" stroke="#d0d0d0" stroke-width=".35">$0</text>
<rect x="533.500" y="747.2" width="12" height="12" fill="#cf9a9d" stroke="#c9a0a2" stroke-width="1"/>
<text x="551" y="757.1" font-size="12" font-weight="700" fill="#d0d0d0" stroke="#d0d0d0" stroke-width=".35">$0</text>
</g>
</svg>
<!--CHART-END-->

<!--PIE-START-->
<div class="a card" style="left:1182px;top:495px;width:461px;height:342px"></div>
<div class="a" style="left:1183px;top:540px;width:459px;height:1px;background:#e0e4f0"></div>
<svg style="left:1203.5px;top:511.500px" width="14.6" height="13" viewBox="0 0 576 512" fill="#0d5fd0"><path d="M304 240V16.600c0-9 7-16.600 16-16.600C443.700 0 544 100.300 544 224c0 9-7.600 16-16.600 16H304zM32 272C32 150.700 122.100 50.300 239 34.300c9.200-1.300 17 6.100 17 15.400V288L412.500 444.500c6.700 6.700 6.200 17.700-1.500 23.100C371.800 495.600 323.800 512 272 512 139.500 512 32 404.600 32 272zm526.400 16c9.300 0 16.600 7.800 15.400 17-7.700 55.900-34.600 105.600-73.900 142.300-6 5.600-15.400 5.200-21.200-.7L320 288H558.400z"/></svg>
<div class="t ch" id="p_title" style="left:1227px;top:518px">Tax Composition</div>
<svg style="left:1312px;top:551px" width="200" height="200" viewBox="1312 551 200 200"><path d="M1412.30 561.00A90 90 0 1 1 1328.72 617.63L1357.97 629.31A58.5 58.5 0 1 0 1412.30 592.50z" fill="#6a1b9a"/><path d="M1328.72 617.63A90 90 0 0 1 1412.30 561.00L1412.30 592.50A58.5 58.5 0 0 0 1357.97 629.31z" fill="#f57c00"/></svg>
<div class="a" style="left:1203px;top:758px;width:10px;height:10px;border-radius:5px;background:#c62828"></div>
<div class="t lg" id="p0l" style="left:1221.5px;top:763px">Income Tax</div>
<div class="t lp r" id="p0p" style="right:43.5px;top:763px">0%</div>
<div class="t lv r" id="p0v" style="right:67.3px;top:763px">$0</div>
<div class="a" style="left:1203px;top:781px;width:10px;height:10px;border-radius:5px;background:#6a1b9a"></div>
<div class="t lg" id="p1l" style="left:1221.5px;top:786px">Social Security</div>
<div class="t lp r" id="p1p" style="right:43.5px;top:786px">81%</div>
<div class="t lv r" id="p1v" style="right:73.3px;top:786px">$7</div>
<div class="a" style="left:1203px;top:804px;width:10px;height:10px;border-radius:5px;background:#f57c00"></div>
<div class="t lg" id="p2l" style="left:1221.5px;top:809px">Medicare</div>
<div class="t lp r" id="p2p" style="right:43.5px;top:809px">19%</div>
<div class="t lv r" id="p2v" style="right:72.3px;top:809px">$2</div>
<div class="a card" style="left:245px;top:853px;width:1398px;height:80px;border-radius:8px 8px 0 0"></div>
<div class="a" style="left:246px;top:898px;width:1396px;height:1px;background:#e0e4f0"></div>
<svg style="left:266px;top:869.5px" width="13" height="13" viewBox="0 0 512 512" fill="#0d5fd0"><path fill-rule="evenodd" d="M64 256V160H224v96H64zm0 64H224v96H64V320zm224 96V320H448v96H288zM448 256H288V160H448v96zM64 32C28.700 32 0 60.700 0 96V416c0 35.300 28.700 64 64 64H448c35.300 0 64-28.700 64-64V96c0-35.300-28.700-64-64-64H64z"/></svg>
<div class="t ch" id="e_title" style="left:288px;top:876px">Employee Tax Estimates — 2026</div>
<div class="t ss r" id="e_cnt" style="right:43.5px;top:877px;font-size:11.5px">1 employees</div>
<div class="t" id="w1" style="left:1586px;top:827px;font-size:20px;line-height:26px;height:26px;margin-top:-13px;color:rgba(120,120,120,.55)">Activate Windows</div>
<div class="t" id="w2" style="left:1586px;top:849px;font-size:14px;color:rgba(120,120,120,.55)">Go to Settings to activate Windows.</div>
<!--PIE-END-->

<!--TABLE-->

<!--WATERMARK-->
</body>
</html>
